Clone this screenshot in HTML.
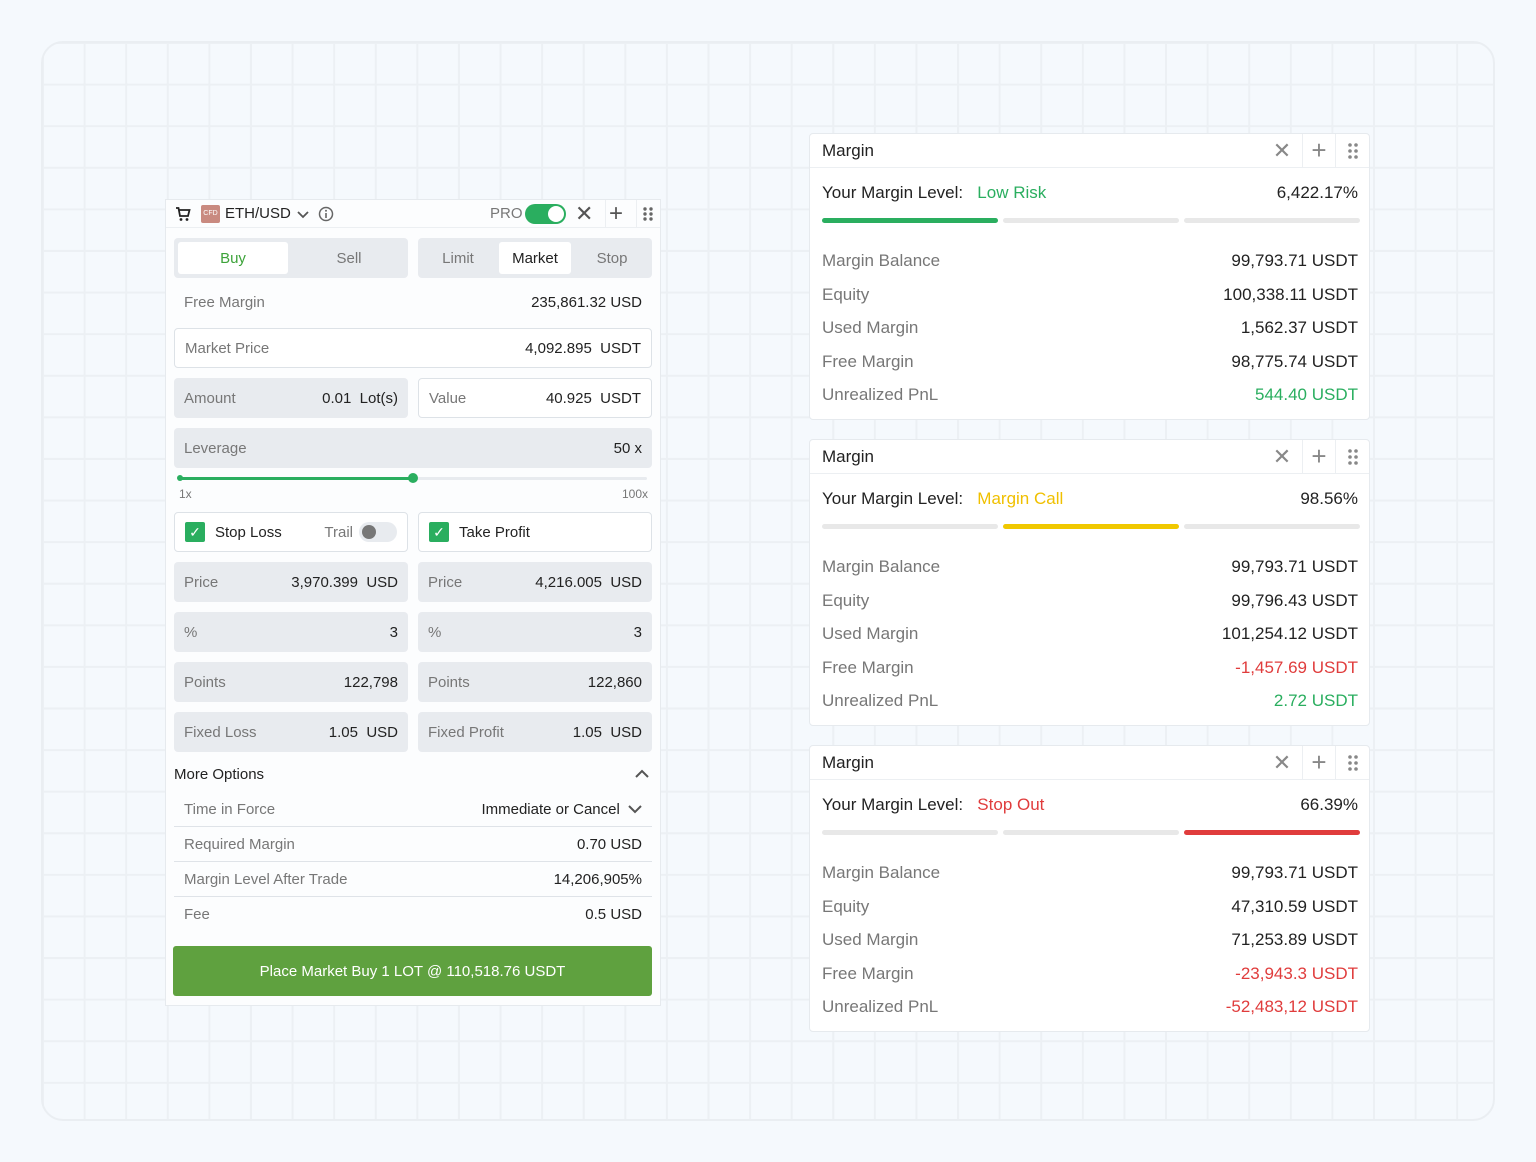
<!DOCTYPE html>
<html><head><meta charset="utf-8"><style>
*{box-sizing:border-box;margin:0;padding:0}
body{width:1536px;height:1162px;background:#f5f9fd;font-family:"Liberation Sans",sans-serif;position:relative;overflow:hidden;color:#222}
.frame{position:absolute;left:41px;top:41px;width:1454px;height:1080px;border:2px solid #eaeef2;border-radius:22px;
background-image:linear-gradient(to right,#ecf0f4 2px,transparent 2px),linear-gradient(to bottom,#ecf0f4 2px,transparent 2px);background-size:41.6px 41.6px;background-position:-1px -1px}
.a{position:absolute}
.lp{position:absolute;left:165px;top:199px;width:496px;height:807px;background:#fcfdfe;border:1px solid #e6eaee;font-size:15px}
.box{position:absolute;border-radius:4px;height:40px;display:flex;align-items:center;justify-content:space-between;padding:0 10px;color:#777}
.g{background:#e8ebef}
.w{background:#fff;border:1px solid #dde2e7}
.v{color:#222}
.rp{position:absolute;left:809px;width:561px;height:287px;background:#fff;border:1px solid #e6eaee;border-radius:4px;font-size:17px}
.rh{height:34px;border-bottom:1px solid #eceff2;display:flex;align-items:center;padding-left:12px;position:relative}
.ic{position:absolute;top:0;height:33px;width:34px;display:flex;align-items:center;justify-content:center;color:#888;font-size:22px}
.ml{position:absolute;left:12px;right:11px;top:49px;display:flex;justify-content:space-between}
.bars{position:absolute;left:12px;top:84px;display:flex;gap:5px}
.bars div{width:176px;height:5px;border-radius:3px;background:#e8e8e8}
.row{position:absolute;left:12px;right:11px;display:flex;justify-content:space-between;color:#777}
.row span:last-child{color:#222}
.gr{color:#2aae5f!important}.rd{color:#e03c3c!important}.yl{color:#f0c000}
.ln{position:absolute;left:8px;right:8px;display:flex;justify-content:space-between;padding:0 10px;color:#777;height:35px;align-items:center;border-bottom:1px solid #dfe3e8}
</style></head><body>
<div class="frame"></div>

<div class="lp">
 <div class="a" style="left:0;right:0;top:0;height:28px;border-bottom:1px solid #eceff2"></div>
 <svg class="a" style="left:9px;top:6px" width="16" height="16" viewBox="0 0 16 16"><path d="M1 2h2.5l1.5 8h8l1.5-6H4" fill="none" stroke="#222" stroke-width="1.8"/><circle cx="6" cy="13.5" r="1.4" fill="#222"/><circle cx="12" cy="13.5" r="1.4" fill="#222"/></svg>
 <div class="a" style="left:35px;top:5px;width:19px;height:18px;background:#c98a80;border-radius:2px;font-size:7px;color:#fff;text-align:center;line-height:18px">CFD</div>
 <div class="a" style="left:59px;top:5px;color:#222">ETH/USD</div>
 <svg class="a" style="left:131px;top:9px" width="12" height="10"><path d="M1 3l5 5 5-5" fill="none" stroke="#555" stroke-width="1.8"/></svg>
 <svg class="a" style="left:152px;top:6px" width="16" height="16"><circle cx="8" cy="8" r="6.5" fill="none" stroke="#666" stroke-width="1.5"/><path d="M8 7v5" stroke="#666" stroke-width="1.6"/><circle cx="8" cy="4.8" r="1" fill="#666"/></svg>
 <div class="a" style="left:324px;top:5px;color:#777">PRO</div>
 <div class="a" style="left:359px;top:4px;width:41px;height:20px;border-radius:10px;background:#2aae5f"><div class="a" style="right:2px;top:2px;width:16px;height:16px;border-radius:50%;background:#fff"></div></div>
 <div class="a" style="left:409px;top:0;font-size:22px;color:#555;line-height:28px">✕</div>
 <div class="a" style="left:439px;top:0;width:1px;height:28px;background:#eceff2"></div>
 <div class="a" style="left:443px;top:0;font-size:24px;color:#555;line-height:28px">+</div>
 <div class="a" style="left:470px;top:0;width:1px;height:28px;background:#eceff2"></div>
 <svg class="a" style="left:476px;top:6px" width="12" height="16"><g fill="#666"><circle cx="3" cy="3" r="1.7"/><circle cx="9" cy="3" r="1.7"/><circle cx="3" cy="8" r="1.7"/><circle cx="9" cy="8" r="1.7"/><circle cx="3" cy="13" r="1.7"/><circle cx="9" cy="13" r="1.7"/></g></svg>

 <div class="box g" style="left:8px;top:38px;width:234px;padding:4px"><div style="width:110px;height:32px;background:#fff;border-radius:3px;color:#3da33a;display:flex;align-items:center;justify-content:center">Buy</div><div style="width:110px;text-align:center">Sell</div></div>
 <div class="box g" style="left:252px;top:38px;width:234px;padding:4px"><div style="width:72px;text-align:center">Limit</div><div style="width:72px;height:32px;background:#fff;border-radius:3px;color:#222;display:flex;align-items:center;justify-content:center">Market</div><div style="width:72px;text-align:center">Stop</div></div>
 <div class="box" style="left:8px;top:82px;width:478px"><span>Free Margin</span><span class="v">235,861.32 USD</span></div>
 <div class="box w" style="left:8px;top:128px;width:478px"><span>Market Price</span><span class="v">4,092.895&nbsp; USDT</span></div>
 <div class="box g" style="left:8px;top:178px;width:234px"><span>Amount</span><span class="v">0.01&nbsp; Lot(s)</span></div>
 <div class="box w" style="left:252px;top:178px;width:234px"><span>Value</span><span class="v">40.925&nbsp; USDT</span></div>
 <div class="box g" style="left:8px;top:228px;width:478px"><span>Leverage</span><span class="v">50 x</span></div>
 <div class="a" style="left:13px;top:277px;width:234px;height:3px;background:#2aae5f;border-radius:2px"></div>
 <div class="a" style="left:11px;top:275px;width:6px;height:6px;background:#2aae5f;border-radius:50%"></div>
 <div class="a" style="left:247px;top:277px;width:234px;height:3px;background:#e8ebef;border-radius:2px"></div>
 <div class="a" style="left:242px;top:273px;width:10px;height:10px;background:#2aae5f;border-radius:50%"></div>
 <div class="a" style="left:13px;top:287px;font-size:12px;color:#777">1x</div>
 <div class="a" style="right:12px;top:287px;font-size:12px;color:#777">100x</div>
 <div class="box w" style="left:8px;top:312px;width:234px;color:#222;justify-content:flex-start"><span style="width:20px;height:20px;background:#2aae5f;border-radius:2px;color:#fff;font-size:14px;text-align:center;line-height:20px">✓</span><span style="margin-left:10px">Stop Loss</span><span style="margin-left:auto;color:#777">Trail</span><span style="margin-left:6px;width:38px;height:20px;border-radius:10px;background:#e8ebef;position:relative"><span style="position:absolute;left:3px;top:3px;width:14px;height:14px;border-radius:50%;background:#777"></span></span></div>
 <div class="box w" style="left:252px;top:312px;width:234px;color:#222;justify-content:flex-start"><span style="width:20px;height:20px;background:#2aae5f;border-radius:2px;color:#fff;font-size:14px;text-align:center;line-height:20px">✓</span><span style="margin-left:10px">Take Profit</span></div>
 <div class="box g" style="left:8px;top:362px;width:234px"><span>Price</span><span class="v">3,970.399&nbsp; USD</span></div>
 <div class="box g" style="left:252px;top:362px;width:234px"><span>Price</span><span class="v">4,216.005&nbsp; USD</span></div>
 <div class="box g" style="left:8px;top:412px;width:234px"><span>%</span><span class="v">3</span></div>
 <div class="box g" style="left:252px;top:412px;width:234px"><span>%</span><span class="v">3</span></div>
 <div class="box g" style="left:8px;top:462px;width:234px"><span>Points</span><span class="v">122,798</span></div>
 <div class="box g" style="left:252px;top:462px;width:234px"><span>Points</span><span class="v">122,860</span></div>
 <div class="box g" style="left:8px;top:512px;width:234px"><span>Fixed Loss</span><span class="v">1.05&nbsp; USD</span></div>
 <div class="box g" style="left:252px;top:512px;width:234px"><span>Fixed Profit</span><span class="v">1.05&nbsp; USD</span></div>
 <div class="a" style="left:8px;top:566px;color:#222">More Options</div>
 <svg class="a" style="left:469px;top:569px" width="14" height="10"><path d="M1 8l6-6 6 6" fill="none" stroke="#555" stroke-width="2"/></svg>
 <div class="ln" style="top:592px"><span>Time in Force</span><span class="v">Immediate or Cancel <svg width="14" height="10" style="margin-left:4px"><path d="M1 2l6 6 6-6" fill="none" stroke="#555" stroke-width="2"/></svg></span></div>
 <div class="ln" style="top:627px"><span>Required Margin</span><span class="v">0.70 USD</span></div>
 <div class="ln" style="top:662px"><span>Margin Level After Trade</span><span class="v">14,206,905%</span></div>
 <div class="ln" style="top:697px;border:none"><span>Fee</span><span class="v">0.5 USD</span></div>
 <div class="a" style="left:7px;top:746px;width:479px;height:50px;background:#5fa13f;border-radius:3px;color:#fff;display:flex;align-items:center;justify-content:center">Place Market Buy 1 LOT @ 110,518.76 USDT</div>
</div>

<!-- right panels -->
<div class="rp" style="top:133px">
 <div class="rh">Margin<div class="ic" style="left:455px">✕</div><div class="a" style="left:492px;top:0;width:1px;height:33px;background:#eceff2"></div><div class="ic" style="left:492px;font-size:26px">+</div><div class="a" style="left:525px;top:0;width:1px;height:33px;background:#eceff2"></div><div class="ic" style="left:526px"><svg width="12" height="18"><g fill="#888"><circle cx="3" cy="3" r="1.8"/><circle cx="9" cy="3" r="1.8"/><circle cx="3" cy="9" r="1.8"/><circle cx="9" cy="9" r="1.8"/><circle cx="3" cy="15" r="1.8"/><circle cx="9" cy="15" r="1.8"/></g></svg></div></div>
 <div class="ml"><span>Your Margin Level:&nbsp;&nbsp; <span class="gr">Low Risk</span></span><span>6,422.17%</span></div>
 <div class="bars"><div style="background:#2aae5f"></div><div></div><div></div></div>
 <div class="row" style="top:117px"><span>Margin Balance</span><span>99,793.71 USDT</span></div>
 <div class="row" style="top:151px"><span>Equity</span><span>100,338.11 USDT</span></div>
 <div class="row" style="top:184px"><span>Used Margin</span><span>1,562.37 USDT</span></div>
 <div class="row" style="top:218px"><span>Free Margin</span><span>98,775.74 USDT</span></div>
 <div class="row" style="top:251px"><span>Unrealized PnL</span><span class="gr">544.40 USDT</span></div>
</div>

<div class="rp" style="top:439px">
 <div class="rh">Margin<div class="ic" style="left:455px">✕</div><div class="a" style="left:492px;top:0;width:1px;height:33px;background:#eceff2"></div><div class="ic" style="left:492px;font-size:26px">+</div><div class="a" style="left:525px;top:0;width:1px;height:33px;background:#eceff2"></div><div class="ic" style="left:526px"><svg width="12" height="18"><g fill="#888"><circle cx="3" cy="3" r="1.8"/><circle cx="9" cy="3" r="1.8"/><circle cx="3" cy="9" r="1.8"/><circle cx="9" cy="9" r="1.8"/><circle cx="3" cy="15" r="1.8"/><circle cx="9" cy="15" r="1.8"/></g></svg></div></div>
 <div class="ml"><span>Your Margin Level:&nbsp;&nbsp; <span class="yl">Margin Call</span></span><span>98.56%</span></div>
 <div class="bars"><div></div><div style="background:#f0c800"></div><div></div></div>
 <div class="row" style="top:117px"><span>Margin Balance</span><span>99,793.71 USDT</span></div>
 <div class="row" style="top:151px"><span>Equity</span><span>99,796.43 USDT</span></div>
 <div class="row" style="top:184px"><span>Used Margin</span><span>101,254.12 USDT</span></div>
 <div class="row" style="top:218px"><span>Free Margin</span><span class="rd">-1,457.69 USDT</span></div>
 <div class="row" style="top:251px"><span>Unrealized PnL</span><span class="gr">2.72 USDT</span></div>
</div>

<div class="rp" style="top:745px">
 <div class="rh">Margin<div class="ic" style="left:455px">✕</div><div class="a" style="left:492px;top:0;width:1px;height:33px;background:#eceff2"></div><div class="ic" style="left:492px;font-size:26px">+</div><div class="a" style="left:525px;top:0;width:1px;height:33px;background:#eceff2"></div><div class="ic" style="left:526px"><svg width="12" height="18"><g fill="#888"><circle cx="3" cy="3" r="1.8"/><circle cx="9" cy="3" r="1.8"/><circle cx="3" cy="9" r="1.8"/><circle cx="9" cy="9" r="1.8"/><circle cx="3" cy="15" r="1.8"/><circle cx="9" cy="15" r="1.8"/></g></svg></div></div>
 <div class="ml"><span>Your Margin Level:&nbsp;&nbsp; <span class="rd">Stop Out</span></span><span>66.39%</span></div>
 <div class="bars"><div></div><div></div><div style="background:#e03c3c"></div></div>
 <div class="row" style="top:117px"><span>Margin Balance</span><span>99,793.71 USDT</span></div>
 <div class="row" style="top:151px"><span>Equity</span><span>47,310.59 USDT</span></div>
 <div class="row" style="top:184px"><span>Used Margin</span><span>71,253.89 USDT</span></div>
 <div class="row" style="top:218px"><span>Free Margin</span><span class="rd">-23,943.3 USDT</span></div>
 <div class="row" style="top:251px"><span>Unrealized PnL</span><span class="rd">-52,483,12 USDT</span></div>
</div>
</body></html>
